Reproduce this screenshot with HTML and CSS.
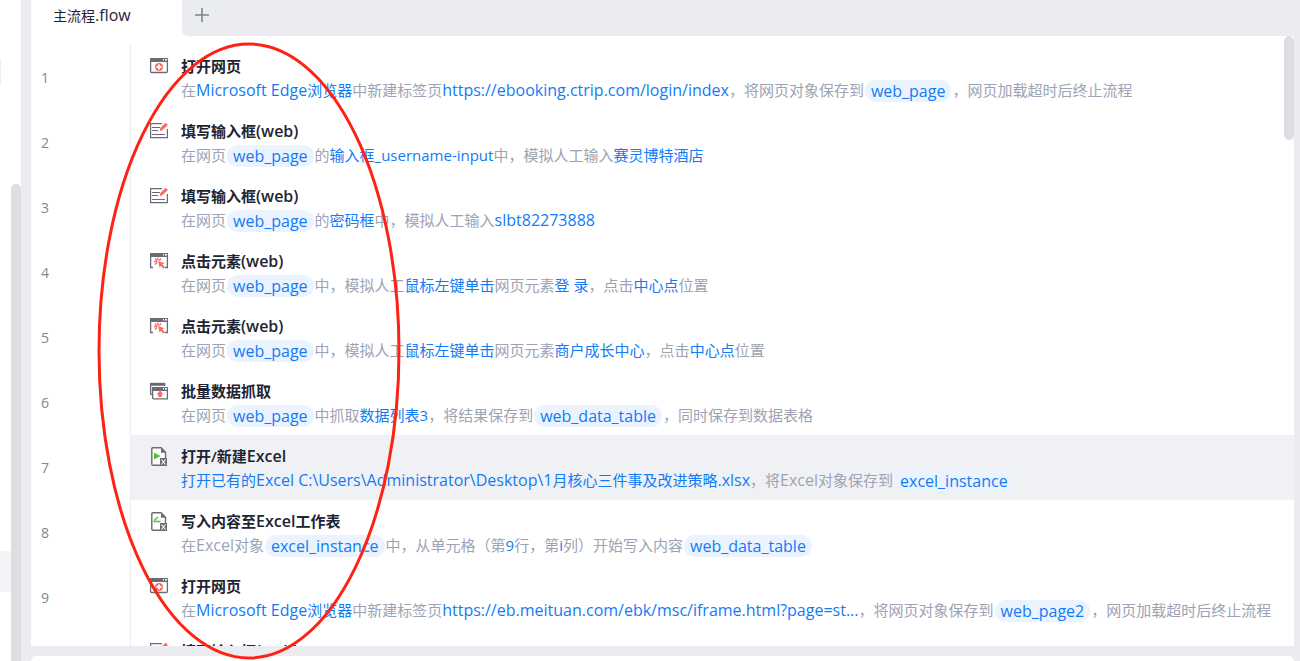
FILE: index.html
```html
<!DOCTYPE html>
<html lang="zh-CN">
<head>
    <meta charset="UTF-8">
    <meta name="viewport" content="width=device-width, initial-scale=1.0">
    <title>主流程.flow</title>
    <link rel="stylesheet" href="styles.css">
</head>
<body>
    <svg class="symbols" aria-hidden="true">
        <symbol id="icon-open" viewBox="0 0 20 18">
            <path d="M1.600 2v12.500q0 1 1 1h14.800q1 0 1-1V2" fill="#fff" stroke="#6b6b75" stroke-width="1.300"/>
            <path d="M1 1.800Q1 1 1.800 1h16.400q.8 0 .8.8V5H1z" fill="#6b6b75"/>
            <path d="M14 2h1v1.500h-1zM16 2h2v1.500h-2z" fill="#fff"/>
            <circle cx="10" cy="10" r="4" fill="#f86b6b"/>
            <path d="M10 7.500v5M7.500 10h5" stroke="#fff" stroke-width="2"/>
        </symbol>
        <symbol id="icon-input" viewBox="0 0 20 18">
            <path d="M13 1.600H1.600v14h16.800V7" fill="none" stroke="#6b6b75" stroke-width="1.200"/>
            <path d="M3 5.500h8M3 8.500h6M3 12.500h13" stroke="#6b6b75" stroke-width="1.200"/>
            <path d="M10.500 9.500l.8-3.500L16.500.8l2.500 2.200-5.500 5z" fill="#f86b6b"/>
        </symbol>
        <symbol id="icon-click" viewBox="0 0 20 18">
            <path d="M4 15.500H1.600V2h16.800v13.500H16" fill="none" stroke="#6b6b75" stroke-width="1.300"/>
            <path d="M1 1h18v4H1z" fill="#6b6b75"/>
            <path d="M14 2h1v1.500h-1zM16 2h2v1.500h-2z" fill="#fff"/>
            <path d="M9 5.500v3M5 9.500h3M6 6.500l2.200 2.200M12.200 6.500l-2 2M6 12.500l2-2" stroke="#f86b6b" stroke-width="1.300"/>
            <path d="M9 9l6.500 2.200-2.200 1.200 2.700 2.800-1.500 1.500-2.800-2.900-1 2z" fill="#f86b6b"/>
        </symbol>
        <symbol id="icon-grab" viewBox="0 0 20 18">
            <path d="M3 12.400H2.400q-.8 0-.8-.8V1.600h14V4" fill="none" stroke="#6b6b75" stroke-width="1.300"/>
            <path d="M1 .8h15.200v3H1z" fill="#6b6b75"/>
            <path d="M3.600 5.600h14.800v11.200H4.600q-1 0-1-1z" fill="#fff" stroke="#6b6b75" stroke-width="1.300"/>
            <path d="M3 5h16v4H3z" fill="#6b6b75"/>
            <path d="M14 6h1v1.500h-1zM16 6h2v1.500h-2z" fill="#fff"/>
            <path d="M11 8.500l3.500 4h-1.800V15H9.300v-2.500H7.500z" fill="#f86b6b"/>
        </symbol>
        <symbol id="icon-excel" viewBox="0 0 20 20">
            <path d="M11 18.300H4q-1.200 0-1.200-1.200V2Q2.800.8 4 .8h8l4.500 4.500V11" fill="#fff" stroke="#6b6b75" stroke-width="1.400"/>
            <path d="M12 .5v5.300h5.200z" fill="#6b6b75"/>
            <path d="M11 11h7v8h-7z" fill="#6b6b75"/>
            <path d="M12.500 12.500l4 5M16.500 12.500l-4 5" stroke="#fff" stroke-width="1.100"/>
        </symbol>
    </svg>

    <div class="app">
        <aside class="sidebar">
            <div class="sidebar-list">
                <div class="sidebar-tip"></div>
                <div class="sidebar-item"></div>
            </div>
            <div class="sidebar-scroll"></div>
        </aside>

        <main class="main">
            <nav class="tabs">
                <a class="tab" href="#flow">主流程<span class="en">.flow</span></a>
                <div class="tab-rest">
                    <button class="add-btn" type="button" aria-label="新建">
                        <svg width="16" height="16"><path d="M8 1v14M1 8h14" stroke="#7b8494" stroke-width="1.600"/></svg>
                    </button>
                </div>
            </nav>

            <section class="editor" id="flow">
                <ol class="steps">
                    <li class="step">
                        <span class="num">1</span>
                        <div class="step-body">
                            <svg class="icon" width="20" height="18"><use href="#icon-open"/></svg>
                            <div class="text">
                                <h2>打开网页</h2>
                                <p>在<b><span class="en">Microsoft Edge</span>浏览器</b>中新建标签页<b class="en">https://ebooking.ctrip.com/login/index</b>，将网页对象保存到<span class="var">web_page</span>，网页加载超时后终止流程</p>
                            </div>
                        </div>
                    </li>
                    <li class="step">
                        <span class="num">2</span>
                        <div class="step-body">
                            <svg class="icon" width="20" height="18"><use href="#icon-input"/></svg>
                            <div class="text">
                                <h2>填写输入框<span class="en">(web)</span></h2>
                                <p>在网页<span class="var">web_page</span>的<b>输入框_username-input</b>中，模拟人工输入<b>赛灵博特酒店</b></p>
                            </div>
                        </div>
                    </li>
                    <li class="step">
                        <span class="num">3</span>
                        <div class="step-body">
                            <svg class="icon" width="20" height="18"><use href="#icon-input"/></svg>
                            <div class="text">
                                <h2>填写输入框<span class="en">(web)</span></h2>
                                <p>在网页<span class="var">web_page</span>的<b>密码框</b>中，模拟人工输入<b class="en">slbt82273888</b></p>
                            </div>
                        </div>
                    </li>
                    <li class="step">
                        <span class="num">4</span>
                        <div class="step-body">
                            <svg class="icon" width="20" height="18"><use href="#icon-click"/></svg>
                            <div class="text">
                                <h2>点击元素<span class="en">(web)</span></h2>
                                <p>在网页<span class="var">web_page</span>中，模拟人工<b>鼠标左键单击</b>网页元素<b>登 录</b>，点击<b>中心点</b>位置</p>
                            </div>
                        </div>
                    </li>
                    <li class="step">
                        <span class="num">5</span>
                        <div class="step-body">
                            <svg class="icon" width="20" height="18"><use href="#icon-click"/></svg>
                            <div class="text">
                                <h2>点击元素<span class="en">(web)</span></h2>
                                <p>在网页<span class="var">web_page</span>中，模拟人工<b>鼠标左键单击</b>网页元素<b>商户成长中心</b>，点击<b>中心点</b>位置</p>
                            </div>
                        </div>
                    </li>
                    <li class="step">
                        <span class="num">6</span>
                        <div class="step-body">
                            <svg class="icon" width="20" height="18"><use href="#icon-grab"/></svg>
                            <div class="text">
                                <h2>批量数据抓取</h2>
                                <p>在网页<span class="var">web_page</span>中抓取<b>数据列表3</b>，将结果保存到<span class="var">web_data_table</span>，同时保存到数据表格</p>
                            </div>
                        </div>
                    </li>
                    <li class="step active">
                        <span class="num">7</span>
                        <div class="step-body">
                            <svg class="icon" width="20" height="20"><use href="#icon-excel"/><path d="M5 5.500l6.500 3.500L5 12.500z" fill="#52c234"/></svg>
                            <div class="text">
                                <h2>打开/新建<span class="en">Excel</span></h2>
                                <p><b>打开已有的<span class="en">Excel C:\Users\Administrator\Desktop\1</span>月核心三件事及改进策略<span class="en">.xlsx</span></b>，将<span class="en">Excel</span>对象保存到<span class="var">excel_instance</span></p>
                            </div>
                        </div>
                    </li>
                    <li class="step">
                        <span class="num">8</span>
                        <div class="step-body">
                            <svg class="icon" width="20" height="20"><use href="#icon-excel"/><path d="M4.500 9.500h7M5 8.500L9 5" stroke="#52c234" stroke-width="1.400"/></svg>
                            <div class="text">
                                <h2>写入内容至<span class="en">Excel</span>工作表</h2>
                                <p>在<span class="en">Excel</span>对象<span class="var">excel_instance</span>中，从单元格（第<b>9</b>行，第<b>i</b>列）开始写入内容<span class="var">web_data_table</span></p>
                            </div>
                        </div>
                    </li>
                    <li class="step">
                        <span class="num">9</span>
                        <div class="step-body">
                            <svg class="icon" width="20" height="18"><use href="#icon-open"/></svg>
                            <div class="text">
                                <h2>打开网页</h2>
                                <p>在<b><span class="en">Microsoft Edge</span>浏览器</b>中新建标签页<b class="en">https://eb.meituan.com/ebk/msc/iframe.html?page=st...</b>，将网页对象保存到<span class="var">web_page2</span>，网页加载超时后终止流程</p>
                            </div>
                        </div>
                    </li>
                    <li class="step">
                        <span class="num">10</span>
                        <div class="step-body">
                            <svg class="icon" width="20" height="18"><use href="#icon-input"/></svg>
                            <div class="text">
                                <h2>填写输入框<span class="en">(web)</span></h2>
                            </div>
                        </div>
                    </li>
                </ol>
                <div class="editor-scroll"></div>
            </section>

            <div class="bottom-panel"></div>
        </main>
    </div>

    <svg class="mark" width="304" height="618" aria-hidden="true">
        <ellipse cx="152" cy="309" rx="150" ry="307" fill="none" stroke="#ff2214" stroke-width="3"/>
    </svg>
</body>
</html>
```
FILE: styles.css
```css
* {
    box-sizing: border-box;
}
body {
    margin: 0;
    font-family: "Open Sans", "Noto Sans CJK SC", sans-serif;
    font-size: 15px;
    color: #1d2433;
    background-color: #ebecf0;
    overflow: hidden;
}
.symbols {
    display: none;
}
.app {
    display: flex;
    height: 100vh;
}
/* latin text is set one size up beside the chinese */
.en {
    font-size: 16px;
}

/* left panel */
.sidebar {
    display: flex;
    width: 21px;
    background-color: #fff;
}
.sidebar-list {
    flex: 1;
}
.sidebar-tip {
    width: 1px;
    height: 26px;
    margin-top: 59px;
    background-color: #ebecf0;
}
.sidebar-item {
    height: 41px;
    margin-top: 466px;
    background-color: #f3f4f6;
}
.sidebar-scroll {
    width: 10px;
    margin-top: 184px;
    border-radius: 5px 5px 0 0;
    background-color: #dddee2;
}

.main {
    display: flex;
    flex: 1;
    flex-direction: column;
    min-width: 0;
    padding: 0 6px 0 10px;
}

/* tabs */
.tabs {
    display: flex;
    height: 36px;
    background-color: #fff;
}
.tab {
    width: 151px;
    padding-left: 22px;
    font-size: 14px;
    line-height: 30px;
    color: #1d2433;
    text-decoration: none;
}
.tab-rest {
    flex: 1;
    border-bottom-left-radius: 6px;
    background-color: #ebecf0;
}
.add-btn {
    display: flex;
    margin: 0;
    padding: 7px 12px;
    border: none;
    background: none;
    cursor: pointer;
}

/* steps */
.editor {
    display: flex;
    flex: 1;
    min-height: 0;
    overflow: hidden;
    position: relative;
    background-color: #fff;
}
.steps {
    flex: 1;
    margin: 0;
    padding: 9px 0 0;
    list-style: none;
}
.step {
    display: flex;
    height: 65px;
}
.num {
    width: 99px;
    padding-left: 10px;
    font-size: 14px;
    line-height: 65px;
    color: #7f8795;
}
.step-body {
    display: flex;
    flex: 1;
    gap: 12px;
    padding: 12px 0 0 18px;
    border-left: 1px solid #ebecf0;
    white-space: nowrap;
}
.active .step-body {
    background-color: #f0f1f5;
}
.icon {
    flex: none;
}
.text h2 {
    margin: 0;
    font-size: 15px;
    font-weight: 600;
    line-height: 18px;
}
.text p {
    margin: 3px 0 0;
    line-height: 24px;
    color: #9da3b4;
}
.text b {
    font-weight: 400;
    color: #127bf5;
}
.var {
    display: inline-block;
    margin: 0 1px;
    padding: 0 6px;
    border-radius: 11px;
    font-size: 16px;
    line-height: 22px;
    vertical-align: -1px;
    color: #127bf5;
    background-color: #ebf3ff;
}
.editor-scroll {
    position: absolute;
    top: 0;
    right: 0;
    width: 10px;
    height: 104px;
    border-radius: 5px;
    background-color: #dddee2;
}

.bottom-panel {
    height: 5px;
    margin-top: 10px;
    border-radius: 6px 6px 0 0;
    background-color: #fff;
}

/* red circle drawn over the steps */
.mark {
    position: absolute;
    top: 42px;
    left: 97px;
    pointer-events: none;
}
```
